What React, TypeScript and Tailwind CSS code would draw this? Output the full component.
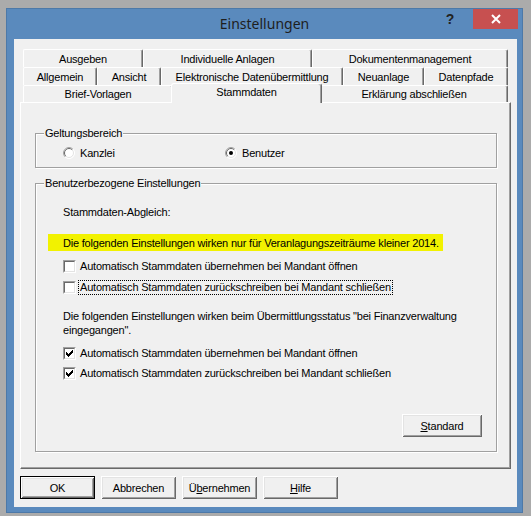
import React from 'react';

const ui = "font-['Liberation_Sans',Arial,sans-serif] text-[11px] leading-[14px] tracking-[-0.2px] text-black";
const raised =
  'shadow-[inset_1px_1px_0_#ffffff,inset_-1px_-1px_0_#696969,inset_2px_2px_0_#e3e3e3,inset_-2px_-2px_0_#a0a0a0]';
const etched = 'border border-[#a0a0a0] shadow-[1px_1px_0_#ffffff,inset_1px_1px_0_#ffffff]';

function Tab({ label, w, active }: { label: string; w: string; active?: boolean }) {
  if (active) {
    return (
      <div
        className={`${w} relative z-10 -mx-[2px] -mt-[2px] -mb-[1px] flex h-[20px] shrink-0 justify-center rounded-t-[3px] border-t border-l border-r border-t-white border-l-white border-r-[#696969] bg-[#f0f0f0] pt-[1px] shadow-[inset_-1px_0_0_#a0a0a0]`}
      >
        {label}
      </div>
    );
  }
  return (
    <div
      className={`${w} flex h-full shrink-0 items-center justify-center rounded-t-[2px] border-t border-l border-r border-t-white border-l-white border-r-[#696969] bg-[#f0f0f0] shadow-[inset_-1px_0_0_#a0a0a0]`}
    >
      {label}
    </div>
  );
}

function CheckBox({ checked }: { checked?: boolean }) {
  return (
    <span className="flex h-[13px] w-[13px] shrink-0 border border-t-[#a0a0a0] border-l-[#a0a0a0] border-b-white border-r-white">
      <span className="flex h-full w-full items-center justify-center border border-t-[#696969] border-l-[#696969] border-b-[#e3e3e3] border-r-[#e3e3e3] bg-white">
        {checked && (
          <svg width="7" height="7" viewBox="0 0 7 7" shapeRendering="crispEdges">
            {[2, 3, 4, 3, 2, 1, 0].map((y, x) => (
              <rect key={x} x={x} y={y} width="1" height="3" fill="#000" />
            ))}
          </svg>
        )}
      </span>
    </span>
  );
}

function Radio({ checked }: { checked?: boolean }) {
  return (
    <svg width="12" height="12" viewBox="0 0 12 12" className="shrink-0">
      <circle cx="6" cy="6" r="5.5" fill="#fff" stroke="#fff" />
      <path d="M2.1 9.9 A5.5 5.5 0 0 1 9.9 2.1" fill="none" stroke="#a0a0a0" />
      <path d="M2.8 9.2 A4.5 4.5 0 0 1 9.2 2.8" fill="none" stroke="#696969" />
      <path d="M9.2 2.8 A4.5 4.5 0 0 1 2.8 9.2" fill="none" stroke="#e3e3e3" />
      {checked && <circle cx="6" cy="6" r="2" fill="#000" />}
    </svg>
  );
}

function Button({ children, isDefault, className = '' }: { children: React.ReactNode; isDefault?: boolean; className?: string }) {
  return (
    <div className={`h-[23px] w-[75px] shrink-0 bg-[#f0f0f0] ${isDefault ? 'border border-black' : ''} ${className}`}>
      <div className={`flex h-full w-full items-center justify-center ${raised}`}>{children}</div>
    </div>
  );
}

export default function App() {
  return (
    <div className={`h-[516px] w-[531px] overflow-hidden bg-[#ababab] pt-[8px] pl-[6px] ${ui}`}>
      <div className="flex h-[505px] w-[517px] flex-col border border-[#4d79a8] bg-[#5a8abd]">
        {/* title bar */}
        <div className="grid h-[30px] shrink-0 grid-cols-[1fr_auto_1fr]">
          <div />
          <div className="pt-[5px] font-['Noto_Sans',sans-serif] text-[14px] leading-[20px] tracking-normal text-[#1e1e1e]">Einstellungen</div>
          <div className="flex justify-end pr-[4px]">
            <div className="flex h-[20px] w-[20px] items-center justify-center font-['Liberation_Sans',sans-serif] text-[14px] font-bold tracking-normal text-[#222]">?</div>
            <div className="ml-[13px] flex h-[20px] w-[45px] items-center justify-center bg-[#c75050]">
              <svg width="10" height="10" viewBox="0 0 10 10">
                <path d="M1 1 L9 9 M9 1 L1 9" stroke="#fff" strokeWidth="2" />
              </svg>
            </div>
          </div>
        </div>

        {/* client area */}
        <div className="ml-[7px] h-[468px] w-[503px] bg-[#f0f0f0] pt-[10px] pl-[6px]">
          <div className="ml-[3px] w-[485px]">
            <div className="flex h-[18px]">
              <Tab label="Ausgeben" w="w-[120px]" />
              <Tab label="Individuelle Anlagen" w="w-[169px]" />
              <Tab label="Dokumentenmanagement" w="w-[196px]" />
            </div>
            <div className="flex h-[18px]">
              <Tab label="Allgemein" w="w-[74px]" />
              <Tab label="Ansicht" w="w-[64px]" />
              <Tab label="Elektronische Datenübermittlung" w="w-[182px]" />
              <Tab label="Neuanlage" w="w-[81px]" />
              <Tab label="Datenpfade" w="w-[84px]" />
            </div>
            <div className="flex h-[17px]">
              <Tab label="Brief-Vorlagen" w="w-[150px]" />
              <Tab label="Stammdaten" w="w-[151px]" active />
              <Tab label="Erklärung abschließen" w="w-[188px]" />
            </div>
          </div>

          {/* tab page */}
          <div className="h-[367px] w-[491px] border border-t-white border-l-white border-r-[#696969] border-b-[#696969] pt-[23px] pl-[14px] shadow-[inset_-1px_-1px_0_#a0a0a0]">
            <fieldset className={`h-[42px] w-[462px] ${etched}`}>
              <legend className="ml-[8px] bg-[#f0f0f0] px-px leading-[14px]">Geltungsbereich</legend>
              <div className="flex h-[26px] items-center pl-[27px]">
                <label className="flex w-[162px] items-center gap-[5px]">
                  <Radio />
                  <span>Kanzlei</span>
                </label>
                <label className="flex items-center gap-[5px]">
                  <Radio checked />
                  <span>Benutzer</span>
                </label>
              </div>
            </fieldset>

            <fieldset className={`mt-[8px] flex h-[276px] w-[462px] flex-col ${etched}`}>
              <legend className="ml-[8px] bg-[#f0f0f0] px-px leading-[14px]">Benutzerbezogene Einstellungen</legend>
              <div className="flex flex-col pl-[27px]">
                <div className="mt-[15px] h-[14px]">Stammdaten-Abgleich:</div>
                <div className="-ml-[15px] mt-[15px] flex h-[17px] w-[395px] items-center whitespace-nowrap bg-[#f2f200] pl-[15px]">
                  Die folgenden Einstellungen wirken nur für Veranlagungszeiträume kleiner 2014.
                </div>
                <label className="mt-[8px] flex h-[14px] items-center gap-[4px]">
                  <CheckBox />
                  <span>Automatisch Stammdaten übernehmen bei Mandant öffnen</span>
                </label>
                <label className="mt-[7px] flex h-[15px] items-center gap-[2px]">
                  <CheckBox />
                  <span className="border border-dotted border-black px-px leading-[13px]">
                    Automatisch Stammdaten zurückschreiben bei Mandant schließen
                  </span>
                </label>
                <p className="mt-[14px] whitespace-nowrap">
                  Die folgenden Einstellungen wirken beim Übermittlungsstatus "bei Finanzverwaltung
                  <br />
                  eingegangen".
                </p>
                <label className="mt-[9px] flex h-[14px] items-center gap-[4px]">
                  <CheckBox checked />
                  <span>Automatisch Stammdaten übernehmen bei Mandant öffnen</span>
                </label>
                <label className="mt-[6px] flex h-[14px] items-center gap-[4px]">
                  <CheckBox checked />
                  <span>Automatisch Stammdaten zurückschreiben bei Mandant schließen</span>
                </label>
                <Button className="mt-[34px] mr-[14px] w-[80px] self-end">
                  <span>
                    <u>S</u>tandard
                  </span>
                </Button>
              </div>
            </fieldset>
          </div>

          {/* dialog buttons */}
          <div className="mt-[7px] flex gap-[6px]">
            <Button isDefault>OK</Button>
            <Button>Abbrechen</Button>
            <Button>
              <span>
                Ü<u>b</u>ernehmen
              </span>
            </Button>
            <Button>
              <span>
                <u>H</u>ilfe
              </span>
            </Button>
          </div>
        </div>
      </div>
    </div>
  );
}
